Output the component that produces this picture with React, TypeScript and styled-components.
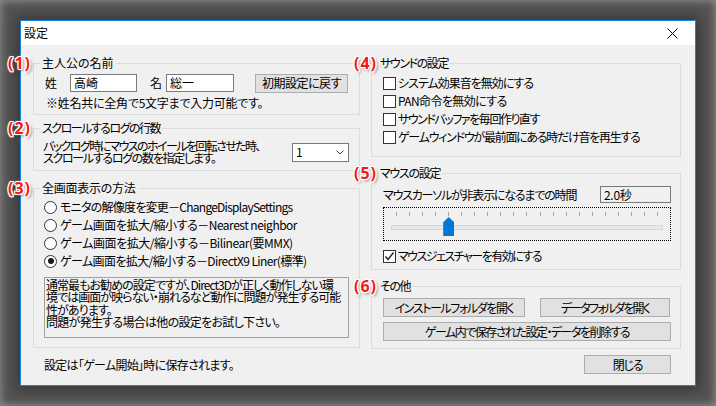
import React from "react";
import styled, { createGlobalStyle } from "styled-components";

const GlobalStyle = createGlobalStyle`
  html, body { margin: 0; padding: 0; }
  body {
    width: 716px;
    height: 406px;
    overflow: hidden;
    background: #525252;
    font-family: "Noto Sans CJK JP", "Noto Sans", sans-serif;
    font-size: 12px;
    color: #000;
    font-feature-settings: "palt";
  }
  #root { width: 716px; height: 406px; }
`;

const Screen = styled.div`
  width: 716px;
  height: 406px;
  box-sizing: border-box;
  padding: 20px 0 0 20px;
  box-shadow: inset 0 0 8px 1px rgba(170, 170, 170, 0.7);
`;

const Window = styled.div`
  width: 676px;
  height: 366px;
  box-sizing: border-box;
  border: 1px solid #1883d7;
  background: #f0f0f0;
  box-shadow: 0 0 12px 3px rgba(0, 0, 0, 0.35);
  display: flex;
  flex-direction: column;
`;

const TitleBar = styled.div`
  height: 24px;
  flex-shrink: 0;
  background: #fff;
  display: flex;
  align-items: center;
  justify-content: space-between;
  padding-left: 3px;
`;

const TitleText = styled.span`
  font-size: 12px;
  line-height: 14px;
`;

const CloseButton = styled.div`
  width: 46px;
  height: 24px;
  display: flex;
  align-items: center;
  justify-content: center;
`;

const Body = styled.div`
  flex: 1;
  padding: 18px 14px 0 12px;
  display: flex;
  flex-direction: column;
`;

const Columns = styled.div`
  display: grid;
  grid-template-columns: 327px 310px;
  column-gap: 11px;
  align-items: start;
`;

const Column = styled.div`
  display: flex;
  flex-direction: column;
`;

const Group = styled.div<{ $h: number; $mt?: number; $pl: number; $pr: number }>`
  position: relative;
  box-sizing: border-box;
  height: ${(p) => p.$h}px;
  margin-top: ${(p) => p.$mt ?? 0}px;
  border: 1px solid #dcdcdc;
  padding: 0 ${(p) => p.$pr}px 0 ${(p) => p.$pl}px;
  display: flex;
  flex-direction: column;
`;

const Legend = styled.div<{ $ml: number; $ls?: number }>`
  align-self: flex-start;
  margin-top: -8px;
  margin-left: ${(p) => p.$ml}px;
  padding: 0 2px;
  line-height: 14px;
  height: 14px;
  background: #f0f0f0;
  white-space: nowrap;
  letter-spacing: ${(p) => p.$ls ?? 0}px;
`;

const Marker = styled.div<{ $left: number }>`
  position: absolute;
  left: ${(p) => p.$left}px;
  top: -9px;
  font-family: "Noto Sans", "Liberation Sans", sans-serif;
  font-weight: 700;
  font-size: 16px;
  line-height: 17px;
  letter-spacing: 1px;
  color: #f01a1a;
  text-shadow: 1px 0 0 #fff, -1px 0 0 #fff, 0 1px 0 #fff, 0 -1px 0 #fff,
    1px 1px 0 #fff, -1px -1px 0 #fff, 1px -1px 0 #fff, -1px 1px 0 #fff,
    0 0 3px #fff, 2px 2px 3px rgba(0, 0, 0, 0.45);
  white-space: nowrap;
`;

const Txt = styled.span<{ $ls: number }>`
  letter-spacing: ${(p) => p.$ls}px;
  white-space: nowrap;
`;

const NameRow = styled.div`
  margin-top: 3px;
  height: 20px;
  display: flex;
  align-items: center;
`;

const FieldLabel = styled.span<{ $ml: number; $mr: number }>`
  margin-left: ${(p) => p.$ml}px;
  margin-right: ${(p) => p.$mr}px;
  line-height: 14px;
`;

const TextInput = styled.div<{ $w: number }>`
  box-sizing: border-box;
  width: ${(p) => p.$w}px;
  height: 18px;
  background: #fff;
  border: 1px solid #7a7a7a;
  padding-left: 3px;
  line-height: 16px;
  white-space: nowrap;
`;

const PushButton = styled.div<{ $w: number; $ml?: number; $ls?: number }>`
  box-sizing: border-box;
  width: ${(p) => p.$w}px;
  height: 19px;
  margin-left: ${(p) => p.$ml ?? 0}px;
  background: #e1e1e1;
  border: 1px solid #adadad;
  display: flex;
  align-items: center;
  justify-content: center;
  line-height: 14px;
  white-space: nowrap;
  letter-spacing: ${(p) => p.$ls ?? 0}px;
`;

const Note = styled.div`
  margin-top: 3px;
  margin-left: 2px;
  line-height: 14px;
  white-space: nowrap;
  letter-spacing: -0.25px;
`;

const ScrollRow = styled.div`
  margin-top: 5px;
  display: flex;
  align-items: center;
  justify-content: space-between;
`;

const TwoLines = styled.div`
  line-height: 12px;
  white-space: nowrap;
  margin-left: -1px;
  display: flex;
  flex-direction: column;
`;

const Select = styled.div`
  box-sizing: border-box;
  width: 57px;
  height: 19px;
  background: #fff;
  border: 1px solid #7a7a7a;
  display: flex;
  align-items: center;
  justify-content: space-between;
  padding: 0 4px 0 3px;
  line-height: 14px;
`;

const OptionList = styled.div<{ $mt: number }>`
  margin-top: ${(p) => p.$mt}px;
  display: flex;
  flex-direction: column;
`;

const OptionRow = styled.div`
  height: 18px;
  display: flex;
  align-items: center;
  white-space: nowrap;
  line-height: 14px;
`;

const RadioCircle = styled.span<{ $on?: boolean }>`
  box-sizing: border-box;
  width: 13px;
  height: 13px;
  border-radius: 50%;
  border: 1px solid #333;
  background: #fff;
  margin-right: 3px;
  flex-shrink: 0;
  display: flex;
  align-items: center;
  justify-content: center;
  &::after {
    content: "";
    display: ${(p) => (p.$on ? "block" : "none")};
    width: 6px;
    height: 6px;
    border-radius: 50%;
    background: #1a1a1a;
  }
`;

const CheckBox = styled.span`
  box-sizing: border-box;
  width: 13px;
  height: 13px;
  border: 1px solid #333;
  background: #fff;
  margin-right: 2px;
  flex-shrink: 0;
  display: flex;
  align-items: center;
  justify-content: center;
`;

const InfoBox = styled.div`
  margin-top: 7px;
  box-sizing: border-box;
  height: 61px;
  border: 1px solid #a0a0a0;
  padding: 1px 0 0 1px;
  display: flex;
  flex-direction: column;
`;

const InfoLine = styled.div<{ $ls: number }>`
  line-height: 12.3px;
  white-space: nowrap;
  letter-spacing: ${(p) => p.$ls}px;
`;

const TimeRow = styled.div`
  margin-top: 6px;
  height: 17px;
  display: flex;
  align-items: center;
  justify-content: space-between;
  line-height: 14px;
  white-space: nowrap;
`;

const TimeBox = styled.div`
  box-sizing: border-box;
  width: 71px;
  height: 17px;
  border: 1px solid #7a7a7a;
  background: #f0f0f0;
  padding-left: 3px;
  line-height: 15px;
  letter-spacing: -0.3px;
`;

const SliderBox = styled.div`
  position: relative;
  margin-top: 4px;
  box-sizing: border-box;
  height: 34px;
  border: 1px dotted #000;
  display: flex;
  flex-direction: column;
`;

const TickRow = styled.div`
  margin: 4px 12px 0 12px;
  height: 4px;
  display: flex;
  justify-content: space-between;
`;

const Tick = styled.span`
  width: 1px;
  height: 4px;
  background: #a8a8a8;
`;

const Track = styled.div`
  margin: 9px 7px 0 7px;
  box-sizing: border-box;
  height: 5px;
  background: #e7eaea;
  border: 1px solid #d6d6d6;
`;

const Thumb = styled.div`
  position: absolute;
  top: 9px;
  width: 11px;
  height: 19px;
  background: #0078d7;
  clip-path: polygon(50% 0, 100% 28%, 100% 100%, 0 100%, 0 28%);
`;

const ButtonRow = styled.div<{ $mt: number }>`
  margin-top: ${(p) => p.$mt}px;
  display: flex;
`;

const Footer = styled.div`
  margin-top: 6px;
  height: 19px;
  display: flex;
  align-items: center;
  justify-content: space-between;
  padding: 0 10px 0 11px;
`;

const FooterText = styled.span`
  line-height: 14px;
  white-space: nowrap;
  letter-spacing: -0.7px;
`;

const Chevron = () => (
  <svg width="8" height="5" viewBox="0 0 8 5">
    <polyline points="0.5,0.5 4,4 7.5,0.5" fill="none" stroke="#333" strokeWidth="1" />
  </svg>
);

const CheckMark = () => (
  <svg width="11" height="11" viewBox="0 0 11 11">
    <polyline points="1.5,5.5 4,8.5 9.5,1.5" fill="none" stroke="#333" strokeWidth="1.6" />
  </svg>
);

const CloseIcon = () => (
  <svg width="11" height="11" viewBox="0 0 11 11">
    <line x1="0.5" y1="0.5" x2="10.5" y2="10.5" stroke="#000" strokeWidth="1" />
    <line x1="10.5" y1="0.5" x2="0.5" y2="10.5" stroke="#000" strokeWidth="1" />
  </svg>
);

const radios: [string, number][] = [
  ["モニタの解像度を変更－ChangeDisplaySettings", -0.75],
  ["ゲーム画面を拡大/縮小する－Nearest neighbor", -0.5],
  ["ゲーム画面を拡大/縮小する－Bilinear(要MMX)", -0.45],
  ["ゲーム画面を拡大/縮小する－DirectX9 Liner(標準)", -0.6],
];

const sounds: [string, number][] = [
  ["システム効果音を無効にする", -1],
  ["PAN命令を無効にする", -0.6],
  ["サウンドバッファを毎回作り直す", -1.45],
  ["ゲームウィンドウが最前面にある時だけ音を再生する", -1.25],
];

const infoLines: [string, number][] = [
  ["通常最もお勧めの設定ですが、Direct3Dが正しく動作しない環", -0.95],
  ["境では画面が映らない・崩れるなど動作に問題が発生する可能", -0.95],
  ["性があります。", -0.9],
  ["問題が発生する場合は他の設定をお試し下さい。", -0.7],
];

const TICKS = 21;
const sliderValue = 4;

export default function App() {
  const thumbLeft = 12 + (sliderValue * 261) / (TICKS - 1) - 5;
  return (
    <>
      <GlobalStyle />
      <Screen>
        <Window>
          <TitleBar>
            <TitleText>設定</TitleText>
            <CloseButton>
              <CloseIcon />
            </CloseButton>
          </TitleBar>
          <Body>
            <Columns>
              <Column>
                <Group $h={52} $pl={10} $pr={10}>
                  <Marker $left={-26}>(1)</Marker>
                  <Legend $ml={-4}>主人公の名前</Legend>
                  <NameRow>
                    <FieldLabel $ml={1} $mr={13}>姓</FieldLabel>
                    <TextInput $w={67}>高崎</TextInput>
                    <FieldLabel $ml={13} $mr={4}>名</FieldLabel>
                    <TextInput $w={68}>総一</TextInput>
                    <PushButton $w={93} $ml={21} $ls={-0.5}>初期設定に戻す</PushButton>
                  </NameRow>
                  <Note>※姓名共に全角で5文字まで入力可能です。</Note>
                </Group>
                <Group $h={43} $mt={13} $pl={10} $pr={10}>
                  <Marker $left={-26}>(2)</Marker>
                  <Legend $ml={-4} $ls={-1.5}>スクロールするログの行数</Legend>
                  <ScrollRow>
                    <TwoLines>
                      <Txt $ls={-1.6}>バックログ時にマウスのホイールを回転させた時、</Txt>
                      <Txt $ls={-1.3}>スクロールするログの数を指定します。</Txt>
                    </TwoLines>
                    <Select>
                      <span>1</span>
                      <Chevron />
                    </Select>
                  </ScrollRow>
                </Group>
                <Group $h={160} $mt={17} $pl={10} $pr={10}>
                  <Marker $left={-26}>(3)</Marker>
                  <Legend $ml={-4} $ls={-0.25}>全画面表示の方法</Legend>
                  <OptionList $mt={3}>
                    {radios.map(([r, ls], i) => (
                      <OptionRow key={r}>
                        <RadioCircle $on={i === 3} />
                        <Txt $ls={ls}>{r}</Txt>
                      </OptionRow>
                    ))}
                  </OptionList>
                  <InfoBox>
                    {infoLines.map(([l, ls]) => (
                      <InfoLine key={l} $ls={ls}>{l}</InfoLine>
                    ))}
                  </InfoBox>
                </Group>
              </Column>
              <Column>
                <Group $h={94} $pl={11} $pr={9}>
                  <Marker $left={-18}>(4)</Marker>
                  <Legend $ml={-5} $ls={-1.4}>サウンドの設定</Legend>
                  <OptionList $mt={4}>
                    {sounds.map(([s, ls]) => (
                      <OptionRow key={s}>
                        <CheckBox />
                        <Txt $ls={ls}>{s}</Txt>
                      </OptionRow>
                    ))}
                  </OptionList>
                </Group>
                <Group $h={97} $mt={16} $pl={11} $pr={9}>
                  <Marker $left={-18}>(5)</Marker>
                  <Legend $ml={-5} $ls={-1.3}>マウスの設定</Legend>
                  <TimeRow>
                    <Txt $ls={-1.2}>マウスカーソルが非表示になるまでの時間</Txt>
                    <TimeBox>2.0秒</TimeBox>
                  </TimeRow>
                  <SliderBox>
                    <TickRow>
                      {Array.from({ length: TICKS }, (_, i) => (
                        <Tick key={i} />
                      ))}
                    </TickRow>
                    <Track />
                    <Thumb style={{ left: `${thumbLeft}px` }} />
                  </SliderBox>
                  <OptionList $mt={6}>
                    <OptionRow>
                      <CheckBox>
                        <CheckMark />
                      </CheckBox>
                      <Txt $ls={-1.5}>マウスジェスチャーを有効にする</Txt>
                    </OptionRow>
                  </OptionList>
                </Group>
                <Group $h={63} $mt={16} $pl={11} $pr={9}>
                  <Marker $left={-18}>(6)</Marker>
                  <Legend $ml={-5} $ls={-1.5}>その他</Legend>
                  <ButtonRow $mt={5}>
                    <PushButton $w={142} $ls={-1.4}>インストールフォルダを開く</PushButton>
                    <PushButton $w={130} $ml={15} $ls={-1.8}>データフォルダを開く</PushButton>
                  </ButtonRow>
                  <ButtonRow $mt={5}>
                    <PushButton $w={288} $ls={-1.5}>ゲーム内で保存された設定・データを削除する</PushButton>
                  </ButtonRow>
                </Group>
              </Column>
            </Columns>
            <Footer>
              <FooterText>設定は「ゲーム開始」時に保存されます。</FooterText>
              <PushButton $w={87} $ls={-1.2}>閉じる</PushButton>
            </Footer>
          </Body>
        </Window>
      </Screen>
    </>
  );
}
